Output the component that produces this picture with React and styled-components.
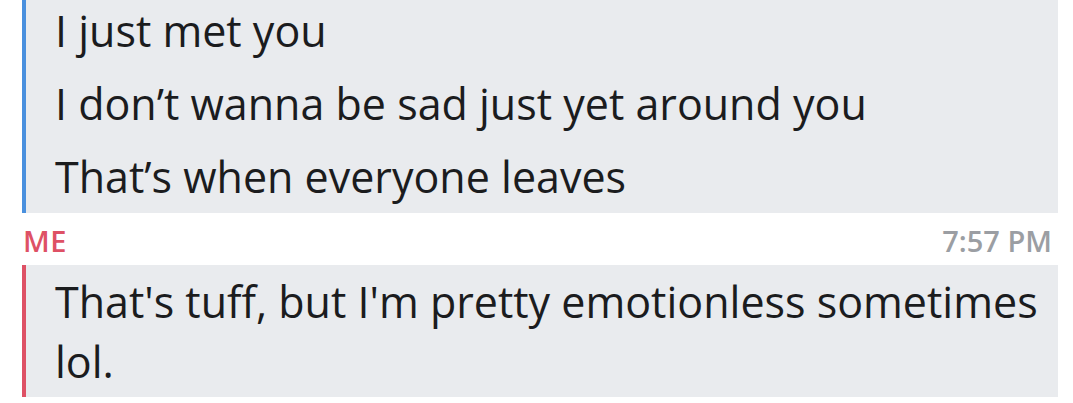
import React from 'react';
import styled, { createGlobalStyle } from 'styled-components';

const GlobalStyle = createGlobalStyle`
  body {
    margin: 0;
    background: #fff;
    font-family: "Open Sans", "Noto Sans", sans-serif;
    font-variant-ligatures: none;
  }
`;

const Thread = styled.div`
  margin-top: -6px;
  padding: 0 15px 0 22px;
`;

const Block = styled.div`
  border-left: 4px solid ${p => p.$color};
  background: #e9ebee;
  padding: ${p => p.$padding || '0'};
  padding-left: 29px;
  padding-right: 16px;
`;

const Line = styled.div`
  font-size: 43px;
  line-height: ${p => p.$lh}px;
  color: #1b1c1e;
`;

const Header = styled.div`
  display: flex;
  justify-content: space-between;
  align-items: flex-end;
  height: 52px;
  box-sizing: border-box;
  padding: 0 6px 10px 1px;
  font-weight: 600;
  font-size: 29px;
  line-height: 29px;
`;

const Sender = styled.span`
  color: ${p => p.$color};
  letter-spacing: 0.5px;
`;

const Time = styled.span`
  color: #9b9ea3;
`;

const blue = '#4a90de';
const red = '#de5165';

const App = () => {
    return (
        <>
            <GlobalStyle />
            <Thread>
                <Block $color={blue}>
                    <Line $lh={73}>I just met you</Line>
                    <Line $lh={73}>I don’t wanna be sad just yet around you</Line>
                    <Line $lh={73}>That’s when everyone leaves</Line>
                </Block>
                <Header>
                    <Sender $color={red}>ME</Sender>
                    <Time>7:57 PM</Time>
                </Header>
                <Block $color={red} $padding="7px 0 5px">
                    <Line $lh={60}>That's tuff, but I'm pretty emotionless sometimes lol.</Line>
                </Block>
            </Thread>
        </>
    )
}

export default App;
